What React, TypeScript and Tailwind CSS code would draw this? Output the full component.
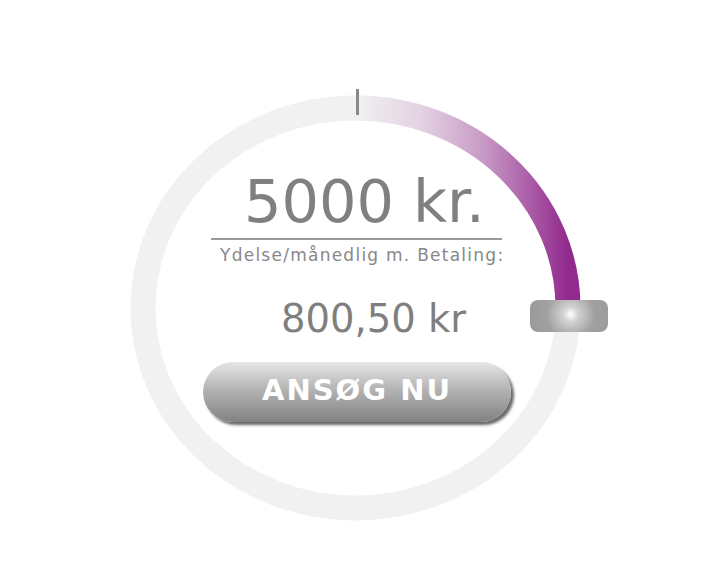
const Gauge = () => {
  return (
    <svg className="absolute inset-0" width="480" height="450" viewBox="0 0 480 450">
      <defs>
        <linearGradient id="arc" gradientUnits="userSpaceOnUse" x1="239.5" y1="0" x2="452" y2="0">
          <stop offset="0" stopColor="#f1f1f1" />
          <stop offset="0.3" stopColor="#e4d3e3" />
          <stop offset="0.6" stopColor="#c89ac6" />
          <stop offset="1" stopColor="#922a8e" />
        </linearGradient>
      </defs>
      <ellipse cx="239.5" cy="225" rx="212.5" ry="200" fill="none" stroke="#f1f1f1" strokeWidth="25" />
      <path d="M 239.5 25 A 212.5 200 0 0 1 452 225" fill="none" stroke="url(#arc)" strokeWidth="25" />
      <rect x="240" y="6" width="3" height="26" fill="#8a8a8a" />
    </svg>
  )
}

const App = () => {
  return (
    <div className="w-[721px] h-[579px] bg-white pt-[83px] pl-[116px]" style={{ fontFamily: '"DejaVu Sans", sans-serif' }}>
      <div className="relative w-[480px] h-[450px]">
        <Gauge />
        <div className="absolute left-[414px] top-[217px] w-[78px] h-[32px] rounded-lg bg-[radial-gradient(circle_at_52%_45%,#ffffff_0,#d0d0d0_18%,#a0a0a0_55%,#9a9a9a_100%)]" />
        <div className="relative flex flex-col pt-[89px]">
          <p className="ml-[128px] text-[59px] leading-none text-[#808080]">5000 kr.</p>
          <div className="ml-[95px] mt-[7px] w-[291px] h-[2px] bg-[#9a9a9a]" />
          <p className="ml-[104px] mt-[7px] text-[17px] leading-none tracking-[1.25px] text-[#888888] whitespace-nowrap">Ydelse/månedlig m. Betaling:</p>
          <p className="ml-[165px] mt-[36px] text-[38.5px] leading-none text-[#7f7f7f] whitespace-nowrap">800,50 kr</p>
          <button className="ml-[87px] mt-[23px] w-[308px] h-[60px] rounded-full bg-[linear-gradient(to_bottom,#e6e6e6,#b4b4b4_45%,#828282)] shadow-[3px_3px_3px_rgba(0,0,0,0.6)] flex items-center justify-center pb-[3px]">
            <span className="text-white text-[29px] font-bold tracking-[2px] leading-none">ANSØG NU</span>
          </button>
        </div>
      </div>
    </div>
  )
}

export default App
